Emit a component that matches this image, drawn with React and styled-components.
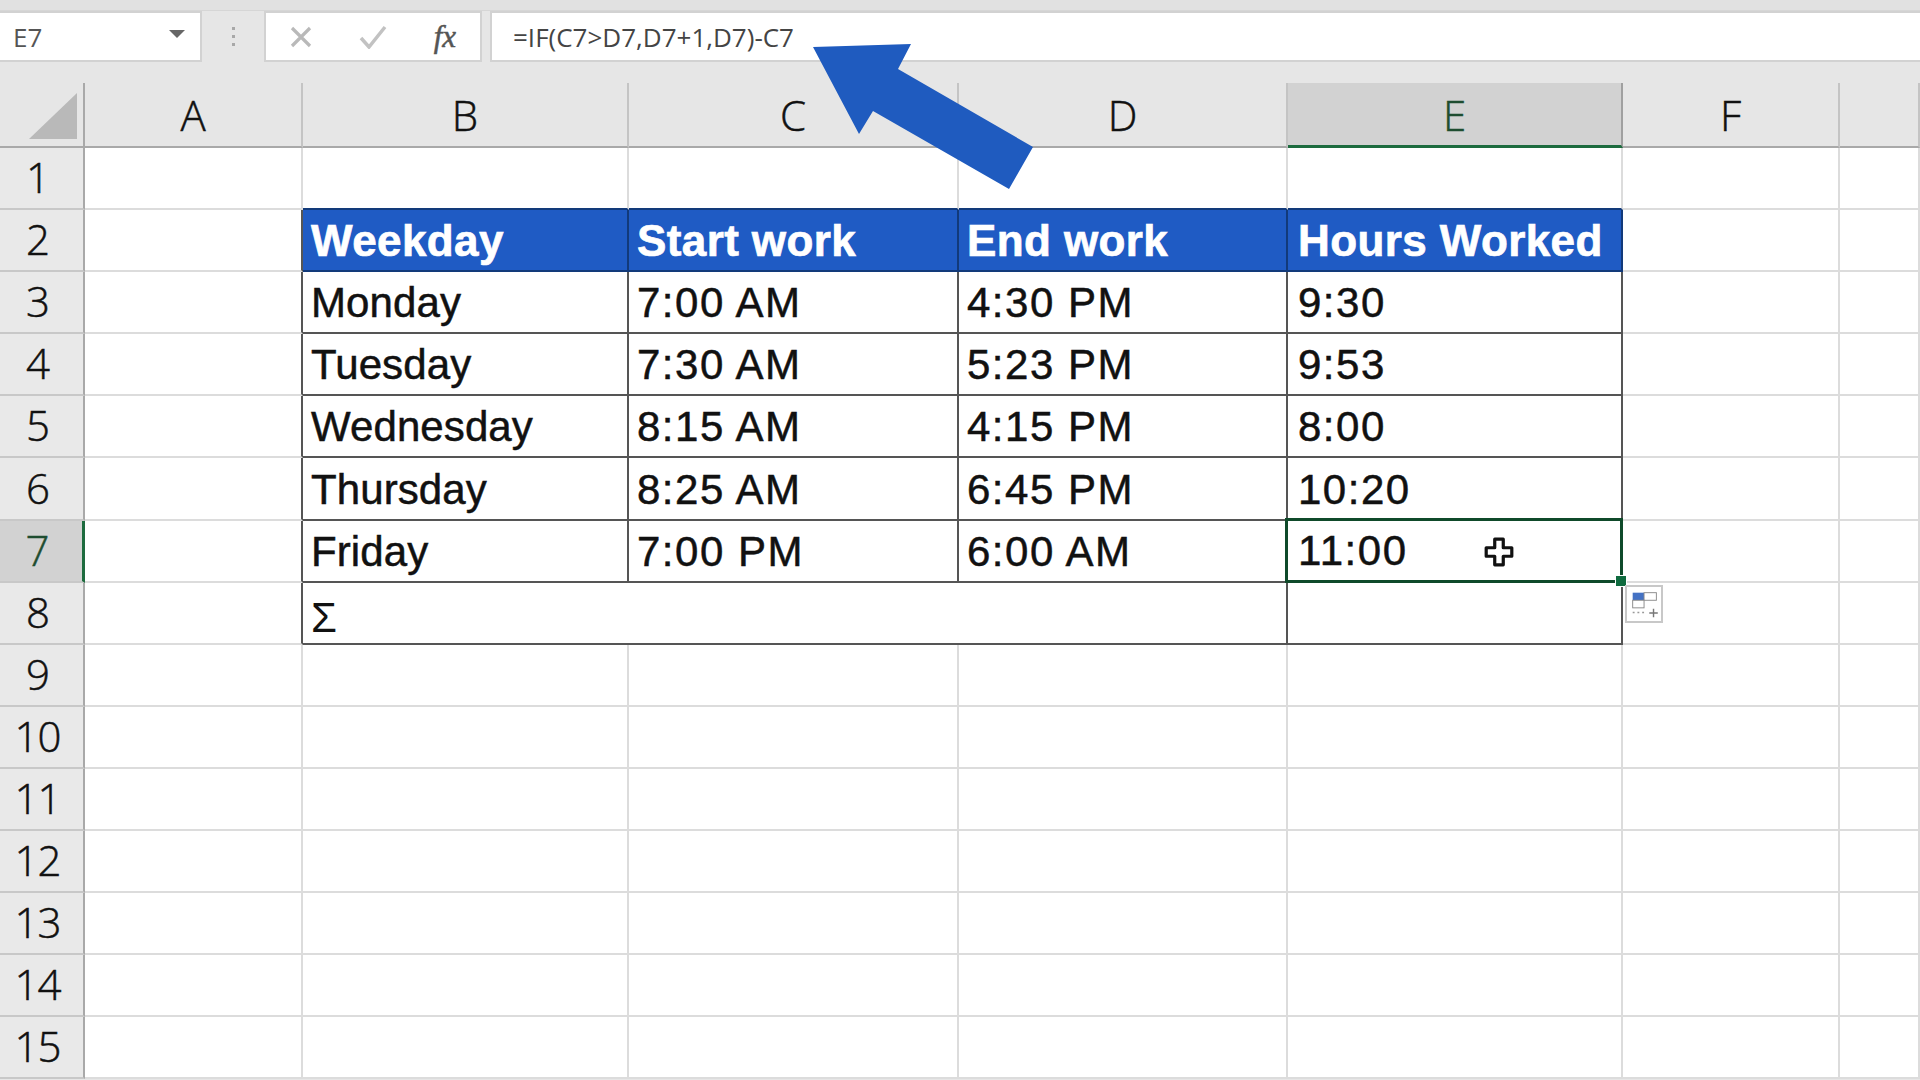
import React from 'react'
import styled, { createGlobalStyle } from 'styled-components'

const columns = ['A', 'B', 'C', 'D', 'E', 'F', '']
const rowNumbers = Array.from({ length: 15 }, (_, i) => i + 1)

const tableData = {
  2: ['Weekday', 'Start work', 'End work', 'Hours Worked'],
  3: ['Monday', '7:00 AM', '4:30 PM', '9:30'],
  4: ['Tuesday', '7:30 AM', '5:23 PM', '9:53'],
  5: ['Wednesday', '8:15 AM', '4:15 PM', '8:00'],
  6: ['Thursday', '8:25 AM', '6:45 PM', '10:20'],
  7: ['Friday', '7:00 PM', '6:00 AM', '11:00']
}

const App = () => {
  const renderRow = (row) => {
    const values = tableData[row]
    return (
      <React.Fragment key={row}>
        <RowHeader $selected={row === 7}>{row}</RowHeader>
        <Cell $dark={row >= 2 && row <= 8 ? 'right' : ''} />
        {values && values.map((text, i) => (
          row === 2 ? (
            <HeadCell key={text} $last={i === 3}>{text}</HeadCell>
          ) : row === 7 && i === 3 ? (
            <SelectedCell key={text}>
              <CellText $numeric>{text}</CellText>
              <MoveCursor viewBox="0 0 30 30">
                <path d="M11 3h8v8h8v8h-8v8h-8v-8H3v-8h8z" fill="#fff" stroke="#111" strokeWidth="3" strokeLinejoin="round" />
              </MoveCursor>
              <FillHandle />
              <QuickAnalysis>
                <svg viewBox="0 0 38 38" width="36" height="36">
                  <rect x="6" y="6" width="12" height="8" fill="#4472c4" />
                  <rect x="18" y="6" width="13" height="8" fill="#fff" stroke="#8a8a8a" />
                  <rect x="6" y="14" width="12" height="8" fill="#fff" stroke="#8a8a8a" />
                  <path d="M6 27h13" stroke="#999" strokeWidth="1.5" strokeDasharray="2 3" />
                  <path d="M28 23v9M23.500 27.500h9" stroke="#777" strokeWidth="1.500" />
                </svg>
              </QuickAnalysis>
            </SelectedCell>
          ) : (
            <TableCell key={text} $last={i === 3}>
              <CellText $numeric={i > 0}>{text}</CellText>
            </TableCell>
          )
        ))}
        {row === 8 && (
          <>
            <SumCell><SumSign>Σ</SumSign></SumCell>
            <TableCell />
          </>
        )}
        {!values && row !== 8 && [1, 2, 3, 4].map(c => (
          <Cell key={c} $dark={row === 1 ? 'bottom' : ''} />
        ))}
        <Cell />
        <Cell />
      </React.Fragment>
    )
  }

  return (
    <Page>
      <GlobalStyle />
      <TopStrip />
      <FormulaBar>
        <NameBox>
          <span>E7</span>
          <Caret />
        </NameBox>
        <Grip>
          <i /><i /><i />
        </Grip>
        <ButtonsBox>
          <svg viewBox="0 0 24 24" width="24" height="24">
            <path d="M3 3l18 18M21 3L3 21" stroke="#b9b9b9" strokeWidth="3.200" fill="none" />
          </svg>
          <svg viewBox="0 0 28 24" width="28" height="24">
            <path d="M2 13l8 9L26 2" stroke="#c2c2c2" strokeWidth="3.500" fill="none" />
          </svg>
          <FxText>fx</FxText>
        </ButtonsBox>
        <FormulaBox>=IF(C7&gt;D7,D7+1,D7)-C7</FormulaBox>
      </FormulaBar>
      <Sheet>
        <Corner>
          <svg viewBox="0 0 84 64" width="84" height="64">
            <path d="M29 56h48V10z" fill="#b9b9b9" />
          </svg>
        </Corner>
        {columns.map((c, i) => (
          <ColumnHeader key={i} $selected={c === 'E'}>{c}</ColumnHeader>
        ))}
        {rowNumbers.map(renderRow)}
      </Sheet>
      <Arrow viewBox="0 0 240 160">
        <path d="M3 7L101 4L88 29L223 107L199 149L63 71L49 94z" fill="#1f5bbf" />
      </Arrow>
    </Page>
  )
}

const GlobalStyle = createGlobalStyle`
  html, body {
    margin: 0;
    padding: 0;
    background: #fff;
  }
`
const Page = styled.div`
  position: relative;
  width: 1920px;
  height: 1080px;
  overflow: hidden;
  background: #e6e6e6;
  font-family: "Open Sans", sans-serif;
`
const TopStrip = styled.div`
  height: 11px;
  background: #e1e1e1;
  border-bottom: 1px solid #d6d6d6;
  box-sizing: border-box;
`
const FormulaBar = styled.div`
  display: flex;
  align-items: stretch;
  height: 51px;
  margin-bottom: 21px;
`
const Box = styled.div`
  display: flex;
  align-items: center;
  background: #fff;
  border: 2px solid #d2d2d2;
  box-sizing: border-box;
`
const NameBox = styled(Box)`
  width: 202px;
  border-left: none;
  padding: 0 15px 0 13px;
  justify-content: space-between;
  font-size: 26px;
  color: #555;
`
const Caret = styled.div`
  width: 0;
  height: 0;
  border-left: 8px solid transparent;
  border-right: 8px solid transparent;
  border-top: 8px solid #666;
  margin-top: -6px;
`
const Grip = styled.div`
  width: 62px;
  display: flex;
  flex-direction: column;
  align-items: center;
  justify-content: center;
  gap: 5px;
  i {
    width: 3px;
    height: 3px;
    background: #a8a8a8;
  }
`
const ButtonsBox = styled(Box)`
  width: 218px;
  padding: 0 24px 0 23px;
  justify-content: space-between;
  margin-right: 8px;
`
const FxText = styled.span`
  font-family: "Liberation Serif", serif;
  font-style: italic;
  font-size: 31px;
  color: #555;
  -webkit-text-stroke: 0.5px #555;
`
const FormulaBox = styled(Box)`
  flex: 1;
  border-right: none;
  padding-left: 21px;
  font-size: 26px;
  color: #444;
`
const Sheet = styled.div`
  display: grid;
  grid-template-columns: 85px 218px 326px 330px 329px 335px 217px 80px;
  grid-template-rows: 65px;
  grid-auto-rows: 62.1px;
`
const Corner = styled.div`
  background: #e6e6e6;
  border-right: 2px solid #a9a9a9;
  border-bottom: 2px solid #a9a9a9;
  box-sizing: border-box;
  height: 65px;
  overflow: hidden;
`
const ColumnHeader = styled.div`
  display: flex;
  align-items: center;
  justify-content: center;
  box-sizing: border-box;
  background: ${p => (p.$selected ? '#d2d2d2' : '#e6e6e6')};
  border-right: 2px solid ${p => (p.$selected ? '#a0a0a0' : '#c4c4c4')};
  border-bottom: ${p => (p.$selected ? '3px solid #1d6b3e' : '2px solid #a9a9a9')};
  font-size: 42px;
  font-weight: 300;
  color: ${p => (p.$selected ? '#1e4d30' : '#111')};
  -webkit-text-stroke: 0.5px currentColor;
`
const RowHeader = styled.div`
  display: flex;
  align-items: center;
  justify-content: center;
  box-sizing: border-box;
  padding: 0 8px 3px 0;
  background: ${p => (p.$selected ? '#d2d2d2' : '#e9e9e9')};
  border-right: ${p => (p.$selected ? '3px solid #1d6b3e' : '2px solid #a9a9a9')};
  border-bottom: 2px solid #c8c8c8;
  font-size: 42px;
  font-weight: 300;
  letter-spacing: -1px;
  color: ${p => (p.$selected ? '#1e4d30' : '#111')};
  -webkit-text-stroke: 0.5px currentColor;
`
const Cell = styled.div`
  box-sizing: border-box;
  background: #fff;
  border-right: 2px solid ${p => (p.$dark === 'right' ? '#555' : '#dcdcdc')};
  border-bottom: 2px solid ${p => (p.$dark === 'bottom' ? '#123a7a' : '#dcdcdc')};
`
const TableCell = styled.div`
  display: flex;
  align-items: center;
  box-sizing: border-box;
  background: #fff;
  padding: 2px 0 0 ${p => (p.$last ? '10px' : '8px')};
  border-right: 2px solid #555;
  border-bottom: 2px solid #555;
`
const CellText = styled.span`
  font-family: "Liberation Sans", Arial, sans-serif;
  font-size: 42px;
  letter-spacing: ${p => (p.$numeric ? '1.5px' : '0.1px')};
  color: #111;
  -webkit-text-stroke: 0.5px #111;
`
const HeadCell = styled.div`
  display: flex;
  align-items: center;
  box-sizing: border-box;
  padding: 2px 0 0 ${p => (p.$last ? '10px' : '8px')};
  background: #1f5bc4;
  border-right: 2px solid #123a7a;
  border-bottom: 2px solid #123a7a;
  font-family: "Liberation Sans", Arial, sans-serif;
  font-weight: 700;
  font-size: 44px;
  letter-spacing: 0.4px;
  color: #fff;
  -webkit-text-stroke: 0.7px #fff;
`
const SelectedCell = styled(TableCell)`
  position: relative;
  margin: -3px 0 0 -3px;
  border: 3px solid #0f4a2a;
  padding-left: 10px;
`
const MoveCursor = styled.svg`
  position: absolute;
  left: 195px;
  top: 15px;
  width: 32px;
  height: 32px;
`
const FillHandle = styled.div`
  position: absolute;
  right: -7px;
  bottom: -7px;
  width: 10px;
  height: 10px;
  background: #0f6b3f;
  border: 1px solid #fff;
`
const QuickAnalysis = styled.div`
  position: absolute;
  left: calc(100% + 5px);
  top: calc(100% + 5px);
  width: 38px;
  height: 38px;
  box-sizing: border-box;
  background: #fff;
  border: 2px solid #c8c8c8;
  z-index: 2;
`
const SumCell = styled(TableCell)`
  grid-column: span 3;
`
const SumSign = styled.span`
  font-family: "Liberation Sans", Arial, sans-serif;
  font-size: 42px;
  color: #111;
  margin-top: 8px;
`
const Arrow = styled.svg`
  position: absolute;
  left: 810px;
  top: 40px;
  width: 240px;
  height: 160px;
`

export default App
